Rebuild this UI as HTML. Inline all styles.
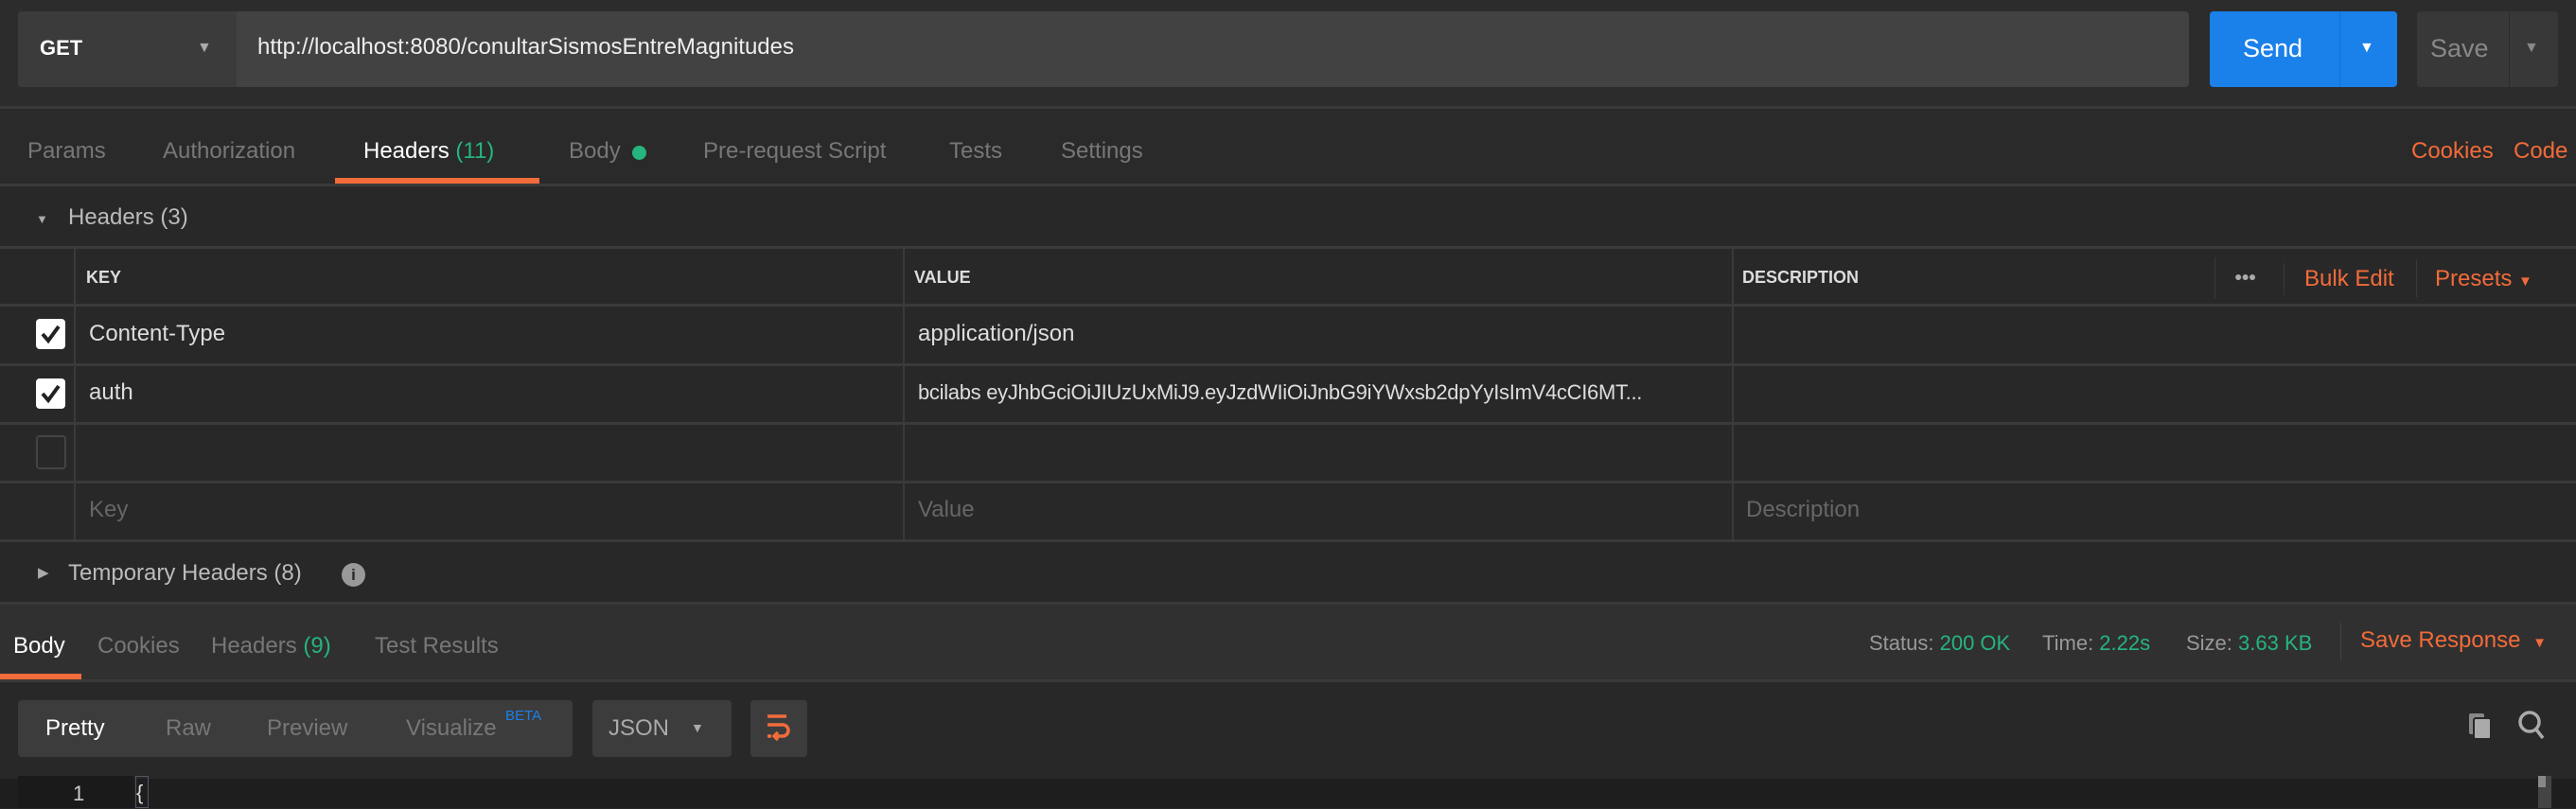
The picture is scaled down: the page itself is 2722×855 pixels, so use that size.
<!DOCTYPE html>
<html><head><meta charset="utf-8"><style>
*{margin:0;padding:0;box-sizing:border-box}
body{width:2722px;height:854px;background:#282828;font-family:"Liberation Sans",sans-serif;color:#ccc;position:relative;overflow:hidden;font-size:22px}
.a{position:absolute;white-space:nowrap}
.hl{position:absolute;left:0;width:2722px;height:3px;background:#3a3a3a}
.vl{position:absolute;width:2px;background:#3a3a3a}
.o{color:#f26b3a}.g{color:#26b47f}.m{color:#8a8a8a}
.cb{position:absolute;left:38px;width:31px;height:32px;border-radius:4px;background:#fff}
.t{font-size:24px}
</style></head><body>
<div class="a" style="left:0;top:0;width:2722px;height:113px;background:#2c2c2c"></div>
<div class="a" style="left:19px;top:12px;width:2294px;height:80px;background:#424242;border-radius:4px"></div>
<div class="a" style="left:19px;top:12px;width:231px;height:80px;background:#3b3b3b;border-radius:4px 0 0 4px"></div>
<div class="a" style="left:42px;top:38px;color:#fff;font-weight:bold;font-size:22px">GET</div>
<div class="a" style="left:208px;top:42px;color:#aaa;font-size:16px">▼</div>
<div class="a" style="left:272px;top:36px;color:#eee;font-size:24px">http://localhost:8080/conultarSismosEntreMagnitudes</div>
<div class="a" style="left:2335px;top:12px;width:198px;height:80px;background:#1a80ea;border-radius:4px"></div>
<div class="a" style="left:2472px;top:12px;width:1px;height:80px;background:#1670d0"></div>
<div class="a" style="left:2370px;top:36px;color:#fff;font-size:27px">Send</div>
<div class="a" style="left:2493px;top:42px;color:#fff;font-size:16px">▼</div>
<div class="a" style="left:2554px;top:12px;width:149px;height:80px;background:#383838;border-radius:4px"></div>
<div class="a" style="left:2651px;top:12px;width:1px;height:80px;background:#2c2c2c"></div>
<div class="a" style="left:2568px;top:36px;color:#888;font-size:27px">Save</div>
<div class="a" style="left:2667px;top:42px;color:#888;font-size:16px">▼</div>
<div class="hl" style="top:112px"></div>
<div class="a" style="left:0;top:115px;width:2722px;height:80px;background:#2a2a2a"></div>
<div class="a t" style="left:29px;top:146px;color:#777">Params</div>
<div class="a t" style="left:172px;top:146px;color:#777">Authorization</div>
<div class="a t" style="left:384px;top:146px;color:#fff">Headers <span class="g">(11)</span></div>
<div class="a t" style="left:601px;top:146px;color:#777">Body</div>
<div class="a" style="left:668px;top:154px;width:15px;height:15px;border-radius:50%;background:#26b47f"></div>
<div class="a t" style="left:743px;top:146px;color:#777">Pre-request Script</div>
<div class="a t" style="left:1003px;top:146px;color:#777">Tests</div>
<div class="a t" style="left:1121px;top:146px;color:#777">Settings</div>
<div class="a o t" style="left:2548px;top:146px">Cookies</div>
<div class="a o t" style="left:2656px;top:146px">Code</div>
<div class="a" style="left:354px;top:188px;width:216px;height:6px;background:#f26b3a"></div>
<div class="hl" style="top:194px"></div>
<div class="a" style="left:38px;top:224px;color:#aaa;font-size:13px">▼</div>
<div class="a t" style="left:72px;top:216px;color:#bbb">Headers (3)</div>
<div class="hl" style="top:260px"></div>
<div class="hl" style="top:321px"></div>
<div class="hl" style="top:384px"></div>
<div class="hl" style="top:446px"></div>
<div class="hl" style="top:508px"></div>
<div class="hl" style="top:570px"></div>
<div class="vl" style="left:78px;top:262px;height:309px"></div>
<div class="vl" style="left:954px;top:262px;height:309px"></div>
<div class="vl" style="left:1830px;top:262px;height:309px"></div>
<div class="a" style="left:91px;top:283px;font-weight:bold;font-size:18px;color:#ddd">KEY</div>
<div class="a" style="left:966px;top:283px;font-weight:bold;font-size:18px;color:#ddd">VALUE</div>
<div class="a" style="left:1841px;top:283px;font-weight:bold;font-size:18px;color:#ddd">DESCRIPTION</div>
<div class="vl" style="left:2340px;top:272px;height:44px;width:1px"></div>
<div class="a" style="left:2361px;top:284px;color:#aaa;font-size:14px;letter-spacing:-1px">●●●</div>
<div class="vl" style="left:2413px;top:278px;height:34px;width:1px"></div>
<div class="a o t" style="left:2435px;top:281px">Bulk Edit</div>
<div class="vl" style="left:2553px;top:274px;height:40px;width:1px"></div>
<div class="a o t" style="left:2573px;top:281px">Presets <span style="font-size:15px">▼</span></div>
<div class="cb" style="top:337px"><svg width="31" height="32"><path d="M7 16l6 7L24 8" stroke="#222" stroke-width="4" fill="none"/></svg></div>
<div class="a t" style="left:94px;top:339px;color:#ddd">Content-Type</div>
<div class="a t" style="left:970px;top:339px;color:#ddd">application/json</div>
<div class="cb" style="top:400px"><svg width="31" height="32"><path d="M7 16l6 7L24 8" stroke="#222" stroke-width="4" fill="none"/></svg></div>
<div class="a t" style="left:94px;top:401px;color:#ddd">auth</div>
<div class="a" style="left:970px;top:402px;font-size:22px;color:#ddd;width:850px;overflow:hidden;letter-spacing:-0.3px">bcilabs eyJhbGciOiJIUzUxMiJ9.eyJzdWIiOiJnbG9iYWxsb2dpYyIsImV4cCI6MT...</div>
<div class="a" style="left:38px;top:460px;width:32px;height:36px;border:2px solid #444;border-radius:4px"></div>
<div class="a t" style="left:94px;top:525px;color:#666">Key</div>
<div class="a t" style="left:970px;top:525px;color:#666">Value</div>
<div class="a t" style="left:1845px;top:525px;color:#666">Description</div>
<div class="a" style="left:40px;top:596px;color:#aaa;font-size:15px">▶</div>
<div class="a t" style="left:72px;top:592px;color:#bbb">Temporary Headers (8)</div>
<div class="a" style="left:361px;top:595px;width:25px;height:25px;border-radius:50%;background:#999;color:#282828;font-weight:bold;font-size:17px;text-align:center;line-height:25px">i</div>
<div class="hl" style="top:636px"></div>
<div class="a" style="left:0;top:639px;width:2722px;height:79px;background:#303030"></div>
<div class="a t" style="left:14px;top:669px;color:#fff">Body</div>
<div class="a t" style="left:103px;top:669px;color:#777">Cookies</div>
<div class="a t" style="left:223px;top:669px;color:#777">Headers <span class="g">(9)</span></div>
<div class="a t" style="left:396px;top:669px;color:#777">Test Results</div>
<div class="a" style="left:0;top:712px;width:86px;height:6px;background:#f26b3a"></div>
<div class="a" style="left:1975px;top:667px;font-size:22px;color:#999">Status: <span class="g">200 OK</span></div>
<div class="a" style="left:2158px;top:667px;font-size:22px;color:#999">Time: <span class="g">2.22s</span></div>
<div class="a" style="left:2310px;top:667px;font-size:22px;color:#999">Size: <span class="g">3.63 KB</span></div>
<div class="vl" style="left:2473px;top:658px;height:40px;width:1px;background:#444"></div>
<div class="a o t" style="left:2494px;top:663px">Save Response <span style="font-size:15px;margin-left:6px">▼</span></div>
<div class="hl" style="top:718px"></div>
<div class="a" style="left:19px;top:740px;width:586px;height:60px;background:#3c3c3c;border-radius:4px"></div>
<div class="a t" style="left:48px;top:756px;color:#fff">Pretty</div>
<div class="a t" style="left:175px;top:756px;color:#777">Raw</div>
<div class="a t" style="left:282px;top:756px;color:#777">Preview</div>
<div class="a t" style="left:429px;top:756px;color:#777">Visualize</div>
<div class="a" style="left:534px;top:748px;font-size:15px;color:#1a80ea">BETA</div>
<div class="a" style="left:626px;top:740px;width:147px;height:60px;background:#3c3c3c;border-radius:4px"></div>
<div class="a t" style="left:643px;top:756px;color:#aaa">JSON</div>
<div class="a" style="left:730px;top:761px;font-size:14px;color:#aaa">▼</div>
<div class="a" style="left:793px;top:740px;width:60px;height:60px;background:#3c3c3c;border-radius:4px"></div>
<svg class="a" style="left:808px;top:753px" width="30" height="34"><path d="M3 4h20M3 13h16a6 6 0 0 1 0 12h-8M14 21l-4 4 4 4M3 25h4" stroke="#f26b3a" stroke-width="3.5" fill="none"/></svg>
<svg class="a" style="left:2606px;top:752px" width="30" height="30"><rect x="3" y="2" width="16" height="22" rx="2" fill="#888"/><rect x="8" y="7" width="18" height="22" rx="2" fill="#aaa" stroke="#282828" stroke-width="2"/></svg>
<svg class="a" style="left:2660px;top:750px" width="30" height="34"><circle cx="13" cy="13" r="10" stroke="#aaa" stroke-width="3.5" fill="none"/><path d="M20 21l7 9" stroke="#aaa" stroke-width="3.5"/></svg>
<div class="a" style="left:0;top:823px;width:2722px;height:31px;background:#1e1e1e"></div>
<div class="a" style="left:19px;top:820px;width:122px;height:34px;background:#1a1a1a"></div>
<div class="a" style="left:77px;top:826px;font-size:22px;color:#ccc">1</div>
<div class="a" style="left:143px;top:820px;width:14px;height:34px;border:1px solid #556;font-size:22px;color:#ddd;line-height:34px">{</div>
<div class="a" style="left:2682px;top:820px;width:14px;height:34px;background:#444"></div>
<div class="a" style="left:2682px;top:820px;width:8px;height:12px;background:#888"></div>
</body></html>
